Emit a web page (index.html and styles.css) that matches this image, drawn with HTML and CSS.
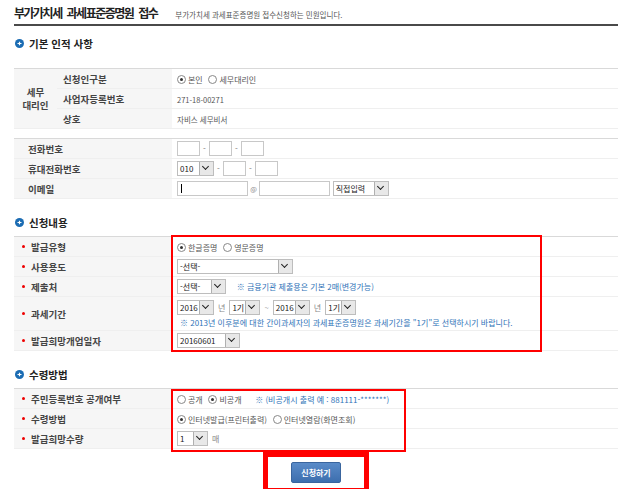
FILE: index.html
```html
<!DOCTYPE html>
<html lang="ko">
<head>
    <meta charset="UTF-8">
    <title>부가가치세 과세표준증명원 접수</title>
    <link rel="stylesheet" href="styles.css">
</head>
<body>
    <div class="page">
        <div class="title-bar">
            <h1>부가가치세 과세표준증명원 접수</h1>
            <span class="subtitle">부가가치세 과세표준증명원 접수신청하는 민원입니다.</span>
        </div>

        <h2 class="sec-title"><span class="sec-icon"><svg width="9" height="9" viewBox="0 0 9 9"><circle cx="4.5" cy="4.5" r="4.5" fill="#1b6cb3"/><path d="M2.5 4.5h4M4.5 2.8v3.4" stroke="#fff" stroke-width="1.2"/></svg></span>기본 인적 사항</h2>

        <table class="form-table">
            <tr>
                <th class="group" rowspan="3">세무<br>대리인</th>
                <th class="sub">신청인구분</th>
                <td>
                    <span class="radio on"></span><span class="opt">본인</span>
                    <span class="radio"></span><span class="opt">세무대리인</span>
                </td>
            </tr>
            <tr>
                <th class="sub">사업자등록번호</th>
                <td><span class="val">271-18-00271</span></td>
            </tr>
            <tr>
                <th class="sub">상호</th>
                <td><span class="val">자비스 세무비서</span></td>
            </tr>
        </table>

        <table class="form-table gap">
            <tr>
                <th class="plain">전화번호</th>
                <td>
                    <span class="inp"></span><span class="dash">-</span><span class="inp"></span><span class="dash">-</span><span class="inp"></span>
                </td>
            </tr>
            <tr>
                <th class="plain">휴대전화번호</th>
                <td>
                    <span class="sel w37"><span class="sel-text">010</span><span class="arrow"></span></span><span class="dash">-</span><span class="inp"></span><span class="dash">-</span><span class="inp"></span>
                </td>
            </tr>
            <tr>
                <th class="plain">이메일</th>
                <td>
                    <span class="inp wide"><span class="caret"></span></span><span class="at">@</span><span class="inp wide"></span>
                    <span class="sel w56"><span class="sel-text">직접입력</span><span class="arrow"></span></span>
                </td>
            </tr>
        </table>

        <h2 class="sec-title sec-next"><span class="sec-icon"><svg width="9" height="9" viewBox="0 0 9 9"><circle cx="4.5" cy="4.5" r="4.5" fill="#1b6cb3"/><path d="M2.5 4.5h4M4.5 2.8v3.4" stroke="#fff" stroke-width="1.2"/></svg></span>신청내용</h2>

        <div class="marked">
            <table class="form-table">
                <tr>
                    <th class="req">발급유형</th>
                    <td>
                        <span class="radio on"></span><span class="opt">한글증명</span>
                        <span class="radio"></span><span class="opt">영문증명</span>
                    </td>
                </tr>
                <tr>
                    <th class="req">사용용도</th>
                    <td><span class="sel w116"><span class="sel-text">-선택-</span><span class="arrow"></span></span></td>
                </tr>
                <tr>
                    <th class="req">제출처</th>
                    <td>
                        <span class="sel w49"><span class="sel-text">-선택-</span><span class="arrow"></span></span>
                        <span class="note">※ 금융기관 제출용은 기본 2매(변경가능)</span>
                    </td>
                </tr>
                <tr class="tall">
                    <th class="req">과세기간</th>
                    <td>
                        <div class="line">
                            <span class="sel w37"><span class="sel-text">2016</span><span class="arrow"></span></span><span class="unit">년</span>
                            <span class="sel w32"><span class="sel-text">1기</span><span class="arrow"></span></span><span class="unit">~</span>
                            <span class="sel w37"><span class="sel-text">2016</span><span class="arrow"></span></span><span class="unit">년</span>
                            <span class="sel w32"><span class="sel-text">1기</span><span class="arrow"></span></span>
                        </div>
                        <div class="note note-line">※ 2013년 이후분에 대한 간이과세자의 과세표준증명원은 과세기간을 "1기"로 선택하시기 바랍니다.</div>
                    </td>
                </tr>
                <tr>
                    <th class="req">발급희망개업일자</th>
                    <td><span class="sel w63"><span class="sel-text">20160601</span><span class="arrow"></span></span></td>
                </tr>
            </table>
            <div class="red-box box-apply"></div>
        </div>

        <h2 class="sec-title sec-next"><span class="sec-icon"><svg width="9" height="9" viewBox="0 0 9 9"><circle cx="4.5" cy="4.5" r="4.5" fill="#1b6cb3"/><path d="M2.5 4.5h4M4.5 2.8v3.4" stroke="#fff" stroke-width="1.2"/></svg></span>수령방법</h2>

        <div class="marked">
            <table class="form-table">
                <tr>
                    <th class="req">주민등록번호 공개여부</th>
                    <td>
                        <span class="radio"></span><span class="opt">공개</span>
                        <span class="radio on"></span><span class="opt">비공개</span>
                        <span class="note">※ (비공개시 출력 예 : 881111-*******)</span>
                    </td>
                </tr>
                <tr>
                    <th class="req">수령방법</th>
                    <td>
                        <span class="radio on"></span><span class="opt">인터넷발급(프린터출력)</span>
                        <span class="radio"></span><span class="opt">인터넷열람(화면조회)</span>
                    </td>
                </tr>
                <tr>
                    <th class="req">발급희망수량</th>
                    <td><span class="sel w31"><span class="sel-text">1</span><span class="arrow"></span></span><span class="unit">매</span></td>
                </tr>
            </table>
            <div class="red-box box-receive"></div>
        </div>

        <div class="actions">
            <div class="btn-box">
                <button class="btn-submit">신청하기</button>
            </div>
        </div>
    </div>
</body>
</html>
```

FILE: styles.css
```css
body {
    margin: 0;
    font-family: "Noto Sans CJK KR", "Noto Sans", sans-serif;
    color: #444;
    background: #fff;
}
.page {
    padding: 0 19px 0 14px;
    overflow: hidden;
    height: 489px;
}
.title-bar {
    display: flex;
    align-items: baseline;
    height: 24px;
    border-bottom: 2px solid #4a4a4a;
}
h1 {
    margin: 4px 0 0;
    font-size: 12px;
    letter-spacing: -1.5px;
    word-spacing: 3px;
    color: #222;
}
.subtitle {
    margin-left: 18px;
    font-size: 7.5px;
    color: #555;
}
.sec-title {
    display: flex;
    align-items: center;
    margin: 10px 0 18px;
    height: 14px;
    font-size: 10.5px;
    color: #222;
}
.sec-next {
    margin-top: 16px;
    margin-bottom: 7px;
}
.sec-icon {
    display: flex;
    margin: 0 5px 0 1px;
}
.form-table {
    width: 100%;
    border-collapse: collapse;
    border-top: 1px solid #d9d9d9;
    border-bottom: 1px solid #d9d9d9;
}
.form-table.gap {
    margin-top: 9px;
}
.form-table th,
.form-table td {
    height: 19px;
    padding: 0;
    border-bottom: 1px solid #efefef;
    font-size: 9.5px;
}
.form-table th {
    background: #f6f6f6;
    text-align: left;
    font-weight: bold;
    color: #444;
    width: 158px;
}
.form-table th.group {
    width: 43px;
    text-align: center;
    line-height: 13px;
}
.form-table th.sub {
    width: 109px;
    padding-left: 6px;
}
.form-table th.plain {
    padding-left: 14px;
    width: 144px;
}
.form-table th.req {
    padding-left: 17px;
    width: 141px;
}
.form-table th.req::before {
    content: "";
    display: inline-block;
    width: 3px;
    height: 3px;
    border-radius: 50%;
    background: #e00;
    margin: 0 6px 2px -9px;
    vertical-align: middle;
}
.form-table td {
    padding-left: 5px;
    white-space: nowrap;
}
.form-table tr.tall td,
.form-table tr.tall th {
    height: 33px;
}
.line {
    display: flex;
    align-items: center;
}
.radio {
    display: inline-block;
    width: 9px;
    height: 9px;
    border: 1px solid #888;
    border-radius: 50%;
    box-sizing: border-box;
    vertical-align: middle;
    position: relative;
    background: #fff;
}
.radio.on::after {
    content: "";
    position: absolute;
    left: 2px;
    top: 2px;
    width: 3px;
    height: 3px;
    border-radius: 50%;
    background: #333;
}
.opt {
    font-size: 8px;
    color: #555;
    margin: 0 3px 0 2px;
    vertical-align: middle;
}
.val {
    font-size: 7.5px;
    color: #555;
}
.inp {
    display: inline-flex;
    align-items: center;
    width: 23px;
    height: 15px;
    border: 1px solid #c8c8c8;
    box-sizing: border-box;
    vertical-align: middle;
    background: #fff;
}
.inp.wide {
    width: 71px;
}
.caret {
    width: 1px;
    height: 9px;
    background: #000;
    margin-left: 3px;
}
.dash {
    display: inline-block;
    width: 9px;
    text-align: center;
    font-size: 8px;
    color: #777;
    vertical-align: middle;
}
.at {
    display: inline-block;
    width: 11px;
    text-align: center;
    font-size: 7px;
    color: #888;
    vertical-align: middle;
}
.sel {
    display: inline-flex;
    align-items: stretch;
    height: 15px;
    border: 1px solid #bdbdbd;
    box-sizing: border-box;
    background: #fff;
    vertical-align: middle;
}
.sel-text {
    flex: 1;
    padding-left: 2px;
    font-size: 8px;
    line-height: 13px;
    color: #222;
    overflow: hidden;
}
.arrow {
    width: 13px;
    background: #e8e8e8;
    border-left: 1px solid #b0b0b0;
    position: relative;
}
.arrow::after {
    content: "";
    position: absolute;
    left: 3px;
    top: 2px;
    width: 4px;
    height: 4px;
    border-right: 1.5px solid #222;
    border-bottom: 1.5px solid #222;
    transform: rotate(45deg);
}
.w31 { width: 31px; }
.w32 { width: 31px; }
.w37 { width: 37px; }
.w49 { width: 49px; }
.w56 { width: 56px; }
.w63 { width: 63px; }
.w116 { width: 116px; }
.unit {
    display: inline-block;
    font-size: 8px;
    color: #888;
    margin: 0 4px;
    vertical-align: middle;
}
.note {
    font-size: 8px;
    color: #2f73b8;
    margin-left: 8px;
    vertical-align: middle;
}
.note-line {
    margin: 2px 0 0 3px;
}
.marked {
    position: relative;
}
.red-box {
    position: absolute;
    border: 2.5px solid #f00;
    box-sizing: border-box;
}
.box-apply {
    left: 157px;
    top: -1px;
    width: 371px;
    height: 117px;
}
.box-receive {
    left: 157px;
    top: 1px;
    width: 235px;
    height: 63px;
}
.actions {
    display: flex;
    justify-content: center;
    margin-top: 3px;
}
.btn-box {
    border: 5px solid #f00;
    padding: 5px 23px 5px 23px;
}
.btn-submit {
    display: block;
    width: 50px;
    height: 21px;
    border: 1px solid #3a659e;
    border-radius: 2px;
    background: linear-gradient(#5a8bc8, #3d6eae);
    color: #fff;
    font-family: "Noto Sans CJK KR", sans-serif;
    font-size: 8px;
    font-weight: bold;
    padding: 0;
}
```
